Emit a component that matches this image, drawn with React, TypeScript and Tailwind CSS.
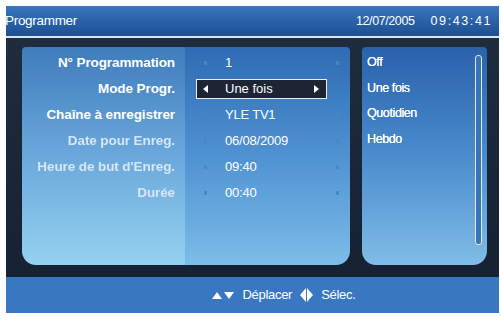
const rows = [
  { label: "N° Programmation", value: "1", active: true },
  { label: "Mode Progr.", value: "Une fois", active: true, selected: true },
  { label: "Chaîne à enregistrer", value: "YLE TV1", active: true },
  { label: "Date pour Enreg.", value: "06/08/2009", active: false },
  { label: "Heure de but d'Enreg.", value: "09:40", active: false },
  { label: "Durée", value: "00:40", active: false },
];

const options = ["Off", "Une fois", "Quotidien", "Hebdo"];

export default function App() {
  return (
    <div className="w-[501px] h-[317px] bg-white pt-[6px] pl-[6px] overflow-hidden" style={{ fontFamily: '"Liberation Sans", Arial, sans-serif' }}>
      <div className="w-[493px] h-[307px] flex flex-col bg-[#1b2a3d]">
        {/* Header */}
        <div className="h-[30px] flex items-center justify-between pr-[7px] bg-gradient-to-b from-[#3a78bd] via-[#2862a9] to-[#1f4f90] text-white">
          <span className="text-[13.5px] -ml-[1px] tracking-[-0.3px]">Programmer</span>
          <div className="flex items-center gap-[16px] text-[12.5px]">
            <span className="tracking-[-0.4px]">12/07/2005</span>
            <span className="tracking-[1.6px]">09:43:41</span>
          </div>
        </div>
        <div className="h-[2px] bg-[#d8e6f2]" />

        {/* Main area */}
        <div className="h-[239px] flex gap-[12px] pl-[16px] pt-[9px] bg-gradient-to-b from-[#1e2c3e] to-[#162233]">
          {/* Left panel */}
          <div className="w-[328px] h-[218px] flex rounded-t-[4px] rounded-b-[14px] overflow-hidden">
            <div className="w-[163px] pt-[3px] pr-[10px] bg-gradient-to-b from-[#3f7cbb] via-[#6aa8dc] to-[#95d2ef] flex flex-col items-end">
              {rows.map((r) => (
                <div
                  key={r.label}
                  className={`h-[26px] flex items-center text-[13.5px] font-bold whitespace-nowrap tracking-[-0.1px] ${r.active ? "text-white" : "text-[#d8e5f3] blur-[0.4px]"}`}
                >
                  {r.label}
                </div>
              ))}
            </div>
            <div className="flex-1 pt-[3px] bg-gradient-to-b from-[#2e6bb3] via-[#4f92d2] to-[#7dbde8] flex flex-col">
              {rows.map((r) =>
                r.selected ? (
                  <div key={r.label} className="h-[26px] flex items-center">
                    <div className="ml-[11px] w-[131px] h-[20px] flex items-center bg-[#1d2433] border-[1.5px] border-[#e8eef2]">
                      <span className="ml-[6px] w-0 h-0 border-y-[4px] border-y-transparent border-r-[5px] border-r-white" />
                      <span className="ml-[17px] flex-1 text-[13px] text-white">{r.value}</span>
                      <span className="mr-[7px] w-0 h-0 border-y-[4px] border-y-transparent border-l-[5px] border-l-white" />
                    </div>
                  </div>
                ) : (
                  <div key={r.label} className="h-[26px] flex items-center">
                    <span className="ml-[19px] w-[3px] h-[4px] bg-[#4d84c2] rounded-[1px]" />
                    <span className="ml-[18px] w-[91px] text-[13px] text-white tracking-[-0.2px]">{r.value}</span>
                    <span className="ml-[20px] w-[3px] h-[4px] bg-[#4d84c2] rounded-[1px]" />
                  </div>
                )
              )}
            </div>
          </div>

          {/* Right panel */}
          <div className="w-[125px] h-[218px] flex rounded-t-[4px] rounded-b-[14px] bg-gradient-to-b from-[#2a61ab] via-[#4a8ccd] to-[#80bde6]">
            <div className="flex-1 pl-[5px] pt-[3px] flex flex-col">
              {options.map((o) => (
                <div key={o} className="h-[25.5px] flex items-center text-[12.5px] text-white tracking-[-0.4px] [text-shadow:0_0_0.6px_#fff]">
                  {o}
                </div>
              ))}
            </div>
            <div className="w-[7px] mr-[5px] mt-[8px] h-[190px] rounded-[3px] border-[1.5px] border-[#e6ead2] bg-[#3a74b8]" />
          </div>
        </div>

        {/* Footer */}
        <div className="h-[36px] bg-[#3977c1] flex items-center justify-center pl-[62px] text-white text-[13px]">
          <span className="flex items-center gap-[2px]">
            <span className="w-0 h-0 border-x-[5px] border-x-transparent border-b-[7px] border-b-white" />
            <span className="w-0 h-0 border-x-[5px] border-x-transparent border-t-[7px] border-t-white" />
          </span>
          <span className="ml-[9px] tracking-[-0.3px]">Déplacer</span>
          <span className="ml-[8px] flex items-center">
            <span className="w-0 h-0 border-y-[7px] border-y-transparent border-r-[6px] border-r-white" />
            <span className="w-0 h-0 border-y-[7px] border-y-transparent border-l-[6px] border-l-white ml-[1px]" />
          </span>
          <span className="ml-[8px] tracking-[-0.3px]">Sélec.</span>
        </div>
      </div>
    </div>
  );
}
